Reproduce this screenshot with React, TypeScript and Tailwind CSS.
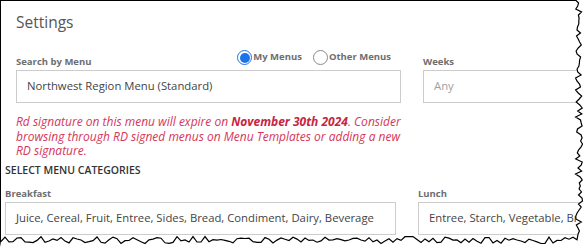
import React from 'react';

// deterministic jitter for the torn paper edge
const makeRng = (seed: number) => () => {
  seed = (seed * 16807) % 2147483647;
  return seed / 2147483647;
};

const buildTorn = () => {
  const r = makeRng(11);
  const pts: [number, number][] = [];
  for (let y = 0; y <= 236; y += 3) pts.push([579 + (r() - 0.5) * 7, y]);
  for (let x = 577; x >= 0; x -= 4) pts.push([x, 240 + (r() - 0.5) * 7]);
  return pts;
};

const TornEdge: React.FC = () => {
  const pts = buildTorn();
  const line = pts.map(([x, y], i) => `${i === 0 ? 'M' : 'L'}${x.toFixed(1)} ${y.toFixed(1)}`).join(' ');
  const fill = `M586 0 ${line.replace(/^M/, 'L')} L0 247 L586 247 Z`;
  return (
    <svg className="absolute inset-0 pointer-events-none" width="586" height="247" viewBox="0 0 586 247">
      <path d={fill} fill="#ffffff" />
      <path d={line} fill="none" stroke="#000" strokeWidth="1.2" />
    </svg>
  );
};

const Radio: React.FC<{ checked?: boolean; label: string }> = ({ checked, label }) => (
  <label className="flex items-center">
    {checked ? (
      <span className="w-[15px] h-[15px] rounded-full border-[1.5px] border-[#1a73e8] flex items-center justify-center">
        <span className="w-[10px] h-[10px] rounded-full bg-[#1a73e8]" />
      </span>
    ) : (
      <span className="w-[15px] h-[15px] rounded-full border border-[#8a8a8a]" />
    )}
    <span className="ml-[1px] text-[9.5px] font-bold text-[#6e6e6e]">{label}</span>
  </label>
);

const Label: React.FC<{ children: React.ReactNode }> = ({ children }) => (
  <div className="text-[9.5px] font-bold text-[#6e6e6e] leading-[14px]">{children}</div>
);

const Field: React.FC<{ value: string; muted?: boolean; className?: string }> = ({ value, muted, className }) => (
  <div
    className={`h-[33px] border border-[#cccccc] flex items-center pl-[10px] text-[11.3px] whitespace-nowrap overflow-hidden ${
      muted ? 'text-[#a0a0a0]' : 'text-[#444444]'
    } ${className ?? ''}`}
  >
    {value}
  </div>
);

export default function App() {
  return (
    <div className="relative w-[586px] h-[247px] bg-white overflow-hidden font-['Open_Sans',sans-serif]">
      <div className="h-full border-t border-l border-black">
        <div className="pl-[15px]">
          <h1 className="pt-[11px] text-[15.5px] leading-[20px] text-[#555555]">Settings</h1>
          <div className="mt-[18px] flex gap-[22px]">
            <div className="w-[385px] shrink-0">
              <div className="h-[19px] flex items-end justify-between pr-[10px]">
                <Label>Search by Menu</Label>
                <div className="flex items-center gap-[11px] mb-[4px]">
                  <Radio checked label="My Menus" />
                  <Radio label="Other Menus" />
                </div>
              </div>
              <Field value="Northwest Region Menu (Standard)" className="mt-[1px]" />
            </div>
            <div className="flex-1">
              <div className="h-[19px] flex items-end">
                <Label>Weeks</Label>
              </div>
              <Field value="Any" muted className="mt-[1px] w-[200px]" />
            </div>
          </div>
          <p className="mt-[12px] w-[388px] text-[12px] italic leading-[14.5px] text-[#d6365a]">
            Rd signature on this menu will expire on <b className="font-bold text-[#c9233f]">November 30th 2024</b>. Consider
            browsing through RD signed menus on Menu Templates or adding a new RD signature.
          </p>
        </div>
        <div className="pl-[4px]">
          <div className="mt-[4px] text-[10.5px] font-semibold leading-[14px] text-[#333333]">SELECT MENU CATEGORIES</div>
          <div className="mt-[10px] flex gap-[22px]">
            <div className="w-[391px] shrink-0">
              <Label>Breakfast</Label>
              <Field
                value="Juice, Cereal, Fruit, Entree, Sides, Bread, Condiment, Dairy, Beverage"
                className="mt-[1px]"
              />
            </div>
            <div className="flex-1">
              <Label>Lunch</Label>
              <Field value="Entree, Starch, Vegetable, Bread, Dairy" className="mt-[1px] w-[250px]" />
            </div>
          </div>
        </div>
      </div>
      <TornEdge />
    </div>
  );
}
